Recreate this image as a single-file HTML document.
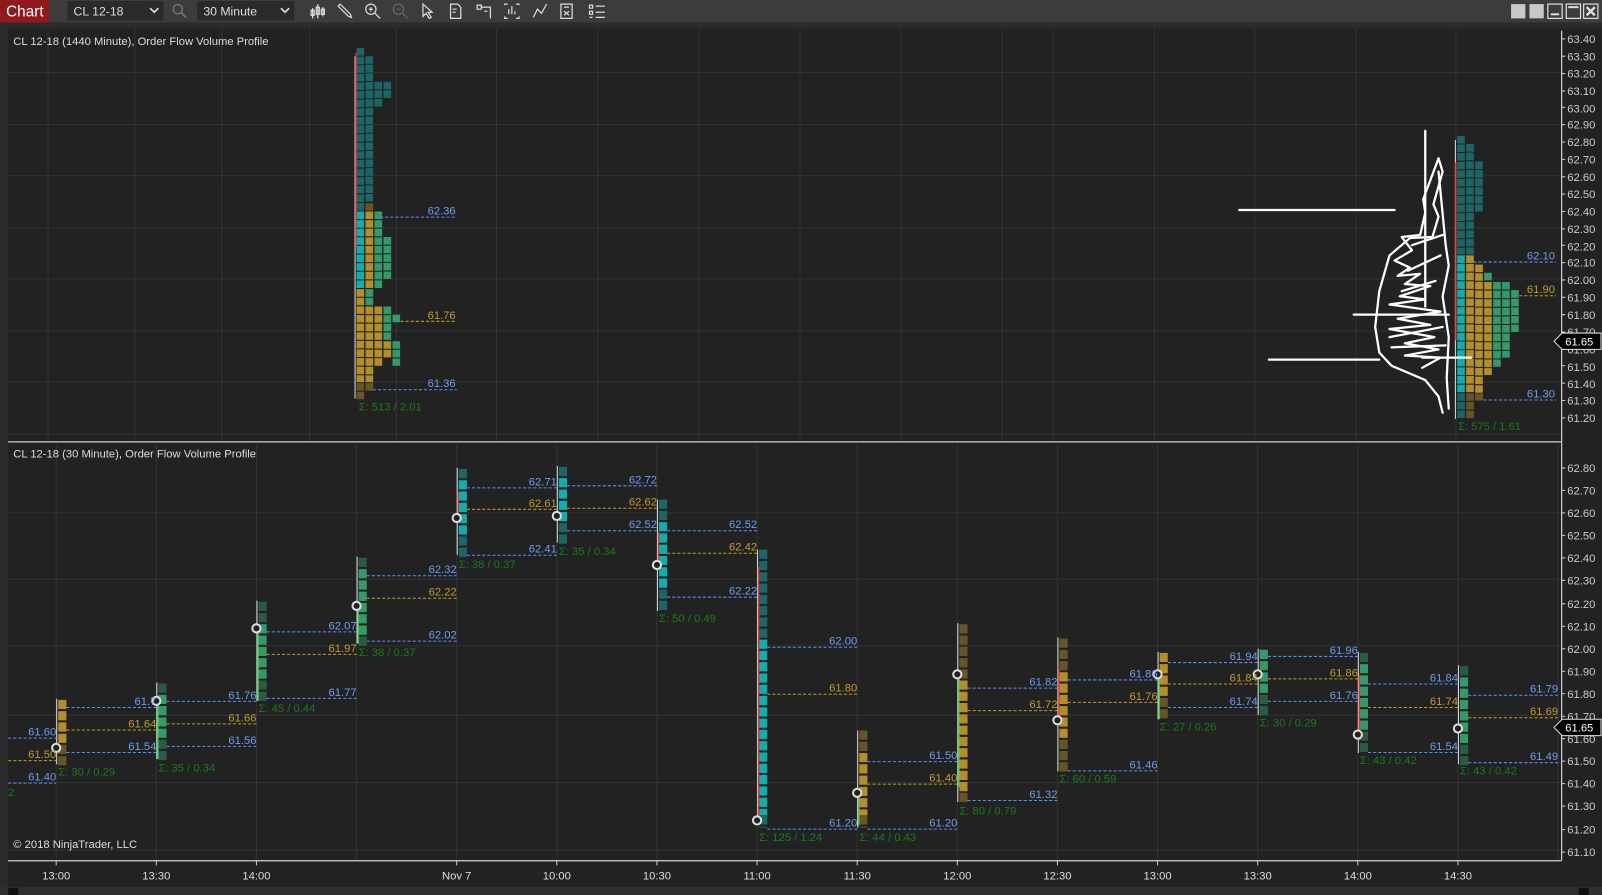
<!DOCTYPE html>
<html><head><meta charset="utf-8"><style>
html,body{margin:0;padding:0;background:#2b2b2b;overflow:hidden}
svg{display:block}
text{font-family:"Liberation Sans",sans-serif}
</style></head><body>
<svg width="1602" height="895" viewBox="0 0 1568 876" xmlns="http://www.w3.org/2000/svg">
<rect width="1568" height="876" fill="#2b2b2b"/>
<!-- toolbar -->
<rect x="0" y="0" width="1568" height="22" fill="#3c3c3c"/>
<rect x="0" y="0" width="48" height="22" fill="#8e1a1c"/>
<text x="6" y="16" font-size="15" fill="#fff">Chart</text>
<rect x="66" y="1" width="94" height="19" fill="#2a2a2a"/>
<text x="72" y="15" font-size="12" fill="#ddd">CL 12-18</text>
<path d="M147 8 l4 4 l4 -4" stroke="#ddd" stroke-width="1.6" fill="none"/>
<circle cx="174" cy="9" r="4.5" stroke="#777" stroke-width="1.3" fill="none"/><path d="M177 12 l5 5" stroke="#777" stroke-width="1.6"/>
<rect x="193" y="1" width="95" height="19" fill="#2a2a2a"/>
<text x="199" y="15" font-size="12" fill="#ddd">30 Minute</text>
<path d="M275 8 l4 4 l4 -4" stroke="#ddd" stroke-width="1.6" fill="none"/>
<g stroke="#ddd" stroke-width="1.2" fill="none">
<path d="M306 8v10M311 4v14M316 7v9"/><rect x="304.5" y="10" width="3" height="5"/><rect x="309.5" y="7" width="3" height="7"/><rect x="314.5" y="9" width="3" height="5"/>
<path d="M331 6 l10 10 l3 1 l-1 -3 l-10 -10z"/>
<circle cx="363" cy="9" r="5"/><path d="M367 13l5 5M361 9h4M363 7v4"/>
<g stroke="#666"><circle cx="390" cy="9" r="5"/><path d="M394 13l5 5M388 9h4"/></g>
<path d="M414 4v12l3-3 3 5 2-1-3-5h4z"/>
<path d="M441 4h7l3 3v11h-10z M443 9h4M443 12h3"/>
<path d="M467 5h4v4h-4zM471 7h9v11M474 11h3"/>
<path d="M494 5v-1h3M494 16v2h3M505 4h3v1M505 18h3v-2M498 14v-5M501 14v-8M504 14v-3"/>
<path d="M522 17l4-8 4 4 5-9"/>
<path d="M549 4h11v14h-11zM552 7h5M552 11l5 4M557 11l-5 4"/>
<path d="M577 5h3v3h-3zM577 11h3v3h-3zM577 17h3v0M583 6h9M583 12h9M583 17h9"/>
</g>
<g fill="#c8c8c8"><rect x="1479" y="4" width="14" height="14"/><rect x="1497" y="4" width="14" height="14"/></g>
<g stroke="#ddd" stroke-width="1.2" fill="none"><rect x="1515" y="4" width="14" height="14"/><path d="M1518 14h8" stroke-width="2"/><rect x="1533" y="4" width="14" height="14"/><path d="M1535 7h10" stroke-width="2"/><rect x="1550" y="4" width="14" height="14"/><path d="M1553 7l8 8M1561 7l-8 8" stroke-width="2.4"/></g>
<!-- chart area -->
<rect x="8" y="28" width="1560" height="840" fill="#222"/>
<rect x="0" y="22" width="8" height="854" fill="#2b2b2b"/>
<rect x="0" y="868" width="1568" height="8" fill="#303030"/>
<!-- top grid -->
<g stroke="#333" stroke-width="1">
<path d="M47 28v403M132 28v403M217 28v403M303 28v403M388 28v403M486 28v403M585 28v403M684 28v403M783 28v403M882 28v403M981 28v403M1031 28v403M1130 28v403M1228 28v403M1327 28v403M1425 28v403"/>
<path d="M8 71H1528M8 122H1528M8 172H1528M8 223H1528M8 273H1528M8 324H1528M8 374H1528M8 425H1528"/>
<path d="M55 435v407M153 435v407M251 435v407M349 435v407M447 435v407M545 435v407M643 435v407M741 435v407M839 435v407M937 435v407M1035 435v407M1133 435v407M1231 435v407M1329 435v407M1427 435v407M1525 435v407"/>
<path d="M8 502H1528M8 567H1528M8 632H1528M8 700H1528M8 766H1528M8 832H1528"/>
</g>
<path d="M8 432.5H1528" stroke="#cfcfcf" stroke-width="1.2"/>
<path d="M1528.5 30V842M8 842.5H1528.5" stroke="#d0d0d0" stroke-width="1.2"/>
<text x="13" y="44" font-size="11" fill="#ddd">CL 12-18 (1440 Minute), Order Flow Volume Profile</text>
<text x="13" y="448" font-size="11" fill="#ddd">CL 12-18 (30 Minute), Order Flow Volume Profile</text>
<text x="13" y="830" font-size="11" fill="#ddd">© 2018 NinjaTrader, LLC</text>
<!-- price axis top -->
<g font-size="11" fill="#ccc">
<text x="1534" y="42">63.40</text><text x="1534" y="59">63.30</text><text x="1534" y="76">63.20</text><text x="1534" y="93">63.10</text><text x="1534" y="110">63.00</text><text x="1534" y="126">62.90</text><text x="1534" y="143">62.80</text><text x="1534" y="160">62.70</text><text x="1534" y="177">62.60</text><text x="1534" y="194">62.50</text><text x="1534" y="211">62.40</text><text x="1534" y="228">62.30</text><text x="1534" y="245">62.20</text><text x="1534" y="261">62.10</text><text x="1534" y="278">62.00</text><text x="1534" y="295">61.90</text><text x="1534" y="312">61.80</text><text x="1534" y="329">61.70</text><text x="1534" y="346">61.60</text><text x="1534" y="363">61.50</text><text x="1534" y="380">61.40</text><text x="1534" y="396">61.30</text><text x="1534" y="413">61.20</text>
<text x="1534" y="462">62.80</text><text x="1534" y="484">62.70</text><text x="1534" y="506">62.60</text><text x="1534" y="528">62.50</text><text x="1534" y="550">62.40</text><text x="1534" y="572">62.30</text><text x="1534" y="595">62.20</text><text x="1534" y="617">62.10</text><text x="1534" y="639">62.00</text><text x="1534" y="661">61.90</text><text x="1534" y="683">61.80</text><text x="1534" y="705">61.70</text><text x="1534" y="727">61.60</text><text x="1534" y="749">61.50</text><text x="1534" y="771">61.40</text><text x="1534" y="793">61.30</text><text x="1534" y="816">61.20</text><text x="1534" y="838">61.10</text>
</g>
<g stroke="#ccc"><path d="M1528 38h4M1528 55h4M1528 72h4M1528 89h4M1528 105h4M1528 122h4M1528 139h4M1528 156h4M1528 173h4M1528 190h4M1528 207h4M1528 224h4M1528 240h4M1528 257h4M1528 274h4M1528 291h4M1528 308h4M1528 325h4M1528 342h4M1528 358h4M1528 375h4M1528 392h4M1528 409h4"/>
<path d="M1528 458h4M1528 480h4M1528 502h4M1528 524h4M1528 546h4M1528 568h4M1528 591h4M1528 613h4M1528 635h4M1528 657h4M1528 679h4M1528 701h4M1528 723h4M1528 745h4M1528 767h4M1528 789h4M1528 812h4M1528 834h4"/></g>
<!-- price markers -->
<path d="M1521 334 l8 -8 h38 v16 h-38z" fill="#000" stroke="#ddd"/><text x="1532" y="338" font-size="11" fill="#fff">61.65</text>
<path d="M1521 712 l8 -8 h38 v16 h-38z" fill="#000" stroke="#ddd"/><text x="1532" y="716" font-size="11" fill="#fff">61.65</text>
<!-- time axis -->
<g stroke="#ccc"><path d="M55 842v5M153 842v5M251 842v5M447 842v5M545 842v5M643 842v5M741 842v5M839 842v5M937 842v5M1035 842v5M1133 842v5M1231 842v5M1329 842v5M1427 842v5"/></g>
<g font-size="11" fill="#ddd" text-anchor="middle">
<text x="55" y="861">13:00</text><text x="153" y="861">13:30</text><text x="251" y="861">14:00</text><text x="447" y="861">Nov 7</text><text x="545" y="861">10:00</text><text x="643" y="861">10:30</text><text x="741" y="861">11:00</text><text x="839" y="861">11:30</text><text x="937" y="861">12:00</text><text x="1035" y="861">12:30</text><text x="1133" y="861">13:00</text><text x="1231" y="861">13:30</text><text x="1329" y="861">14:00</text><text x="1427" y="861">14:30</text>
</g>

<!-- TOP LEFT PROFILE -->
<g stroke-width="7.5" stroke-dasharray="7.4 1.03">
<line x1="352.7" x2="352.7" y1="47" y2="206" stroke="#1e6565"/>
<line x1="352.7" x2="352.7" y1="207" y2="282" stroke="#13adad"/>
<line x1="352.7" x2="352.7" y1="283" y2="374" stroke="#b48e28"/>
<line x1="352.7" x2="352.7" y1="375" y2="392" stroke="#675528"/>
<line x1="361.5" x2="361.5" y1="55" y2="198" stroke="#1e6565"/>
<line x1="361.5" x2="361.5" y1="199" y2="206" stroke="#675528"/>
<line x1="361.5" x2="361.5" y1="207" y2="282" stroke="#b48e28"/>
<line x1="361.5" x2="361.5" y1="283" y2="299" stroke="#35996a"/>
<line x1="361.5" x2="361.5" y1="300" y2="374" stroke="#b48e28"/>
<line x1="361.5" x2="361.5" y1="375" y2="383" stroke="#675528"/>
<line x1="370.3" x2="370.3" y1="80" y2="105" stroke="#1e6565"/>
<line x1="370.3" x2="370.3" y1="207" y2="282" stroke="#35996a"/>
<line x1="370.3" x2="370.3" y1="300" y2="358" stroke="#b48e28"/>
<line x1="379.1" x2="379.1" y1="80" y2="96" stroke="#1e6565"/>
<line x1="379.1" x2="379.1" y1="232" y2="273" stroke="#35996a"/>
<line x1="379.1" x2="379.1" y1="300" y2="333" stroke="#35996a"/>
<line x1="379.1" x2="379.1" y1="334" y2="350" stroke="#b48e28"/>
<line x1="387.9" x2="387.9" y1="308" y2="316" stroke="#35996a"/>
<line x1="387.9" x2="387.9" y1="334" y2="358" stroke="#35996a"/>
</g>
<path d="M347.5 55V390" stroke="#ddd" stroke-width="1"/>
<path d="M348.5 52V242" stroke="#e03030" stroke-width="1.5"/>
<g font-size="11">
<path d="M372 212.5H447" stroke="#5b8ff5" stroke-dasharray="3 2"/><text x="446" y="210" text-anchor="end" fill="#6f9cf0">62.36</text>
<path d="M392 314.5H447" stroke="#c39a2c" stroke-dasharray="3 2"/><text x="446" y="312" text-anchor="end" fill="#c39a2c">61.76</text>
<path d="M365 381.5H447" stroke="#5b8ff5" stroke-dasharray="3 2"/><text x="446" y="379" text-anchor="end" fill="#6f9cf0">61.36</text>
<text x="351" y="402" fill="#1b7a1b">Σ: 513 / 2.01</text>
</g>

<!-- TOP RIGHT PROFILE -->
<g stroke-width="7.5" stroke-dasharray="7.4 1.03">
<line x1="1430" x2="1430" y1="133" y2="249" stroke="#1e6565"/>
<line x1="1430" x2="1430" y1="250" y2="384" stroke="#13adad"/>
<line x1="1430" x2="1430" y1="385" y2="410" stroke="#1e6565"/>
<line x1="1438.8" x2="1438.8" y1="141" y2="249" stroke="#1e6565"/>
<line x1="1438.8" x2="1438.8" y1="250" y2="384" stroke="#b48e28"/>
<line x1="1438.8" x2="1438.8" y1="385" y2="410" stroke="#675528"/>
<line x1="1447.6" x2="1447.6" y1="158" y2="207" stroke="#1e6565"/>
<line x1="1447.6" x2="1447.6" y1="259" y2="392" stroke="#b48e28"/>
<line x1="1447.6" x2="1447.6" y1="385" y2="392" stroke="#675528"/>
<line x1="1456.4" x2="1456.4" y1="267" y2="275" stroke="#35996a"/>
<line x1="1456.4" x2="1456.4" y1="276" y2="367" stroke="#b48e28"/>
<line x1="1465.2" x2="1465.2" y1="276" y2="359" stroke="#35996a"/>
<line x1="1474" x2="1474" y1="276" y2="350" stroke="#35996a"/>
<line x1="1482.8" x2="1482.8" y1="284" y2="325" stroke="#35996a"/>
</g>
<path d="M1424.5 137V410" stroke="#ddd" stroke-width="1"/>
<path d="M1425 159V333" stroke="#e03030" stroke-width="1.5"/>
<g font-size="11">
<path d="M1442 256.5H1523" stroke="#5b8ff5" stroke-dasharray="3 2"/><text x="1522" y="254" text-anchor="end" fill="#6f9cf0">62.10</text>
<path d="M1487 289.5H1523" stroke="#c39a2c" stroke-dasharray="3 2"/><text x="1522" y="287" text-anchor="end" fill="#c39a2c">61.90</text>
<path d="M1452 391.5H1523" stroke="#5b8ff5" stroke-dasharray="3 2"/><text x="1522" y="389" text-anchor="end" fill="#6f9cf0">61.30</text>
<text x="1427" y="421" fill="#1b7a1b">Σ: 575 / 1.61</text>
</g>
<!-- scribble -->
<g stroke="#fff" stroke-width="2.2" fill="none" stroke-linecap="round" stroke-linejoin="round">
<path d="M1213 205.5H1365"/><path d="M1242 352H1350"/>
<path d="M1395 128V300"/>
<path d="M1408 155 L1412 168 L1403 200 L1408 212 L1402 232 L1380 233 L1360 250 L1350 285 L1346 320 L1350 345 L1362 358 L1395 372 L1408 388 L1412 404"/>
<path d="M1408 155 L1393 195 L1395 208 L1390 230 L1372 232 L1382 245 L1365 255 L1380 262 L1368 270 L1390 268 L1375 278 L1400 280 L1370 290 L1395 293 L1360 298 L1410 305 L1368 312 L1400 318 L1360 322 L1404 330 L1375 336 L1408 342 L1375 348 L1410 350 L1392 360"/>
<path d="M1325 308 H1418"/><path d="M1392 350 H1440"/>
<path d="M1408 168 L1415 240 L1418 260 L1412 290 L1418 330 L1416 370 L1418 400"/>
<path d="M1382 240 L1412 230 M1378 265 L1410 250 M1372 285 L1405 275 M1360 330 L1412 320 M1362 340 L1415 338"/>
</g>

<!-- BOTTOM BARS -->
<g stroke-width="8" stroke-dasharray="9 2.05">
<!-- 13:00 -->
<line x1="61" x2="61" y1="685" y2="728" stroke="#b48e28"/><line x1="61" x2="61" y1="729" y2="750" stroke="#675528"/>
<!-- 13:30 -->
<line x1="159" x2="159" y1="669" y2="680" stroke="#2d5a45"/><line x1="159" x2="159" y1="680" y2="724" stroke="#35996a"/><line x1="159" x2="159" y1="724" y2="746" stroke="#2d5a45"/>
<!-- 14:00 -->
<line x1="257" x2="257" y1="589" y2="611" stroke="#2d5a45"/><line x1="257" x2="257" y1="611" y2="666" stroke="#35996a"/><line x1="257" x2="257" y1="666" y2="688" stroke="#2d5a45"/>
<!-- 14:30 -->
<line x1="355" x2="355" y1="546" y2="557" stroke="#2d5a45"/><line x1="355" x2="355" y1="557" y2="623" stroke="#35996a"/><line x1="355" x2="355" y1="623" y2="634" stroke="#2d5a45"/>
<!-- Nov7 -->
<line x1="453" x2="453" y1="459" y2="470" stroke="#1e6565"/><line x1="453" x2="453" y1="470" y2="525" stroke="#13adad"/><line x1="453" x2="453" y1="525" y2="547" stroke="#1e6565"/>
<!-- 10:00 -->
<line x1="551" x2="551" y1="457" y2="468" stroke="#1e6565"/><line x1="551" x2="551" y1="468" y2="512" stroke="#13adad"/><line x1="551" x2="551" y1="512" y2="534" stroke="#1e6565"/>
<!-- 10:30 -->
<line x1="649" x2="649" y1="489" y2="511" stroke="#1e6565"/><line x1="649" x2="649" y1="511" y2="577" stroke="#13adad"/><line x1="649" x2="649" y1="577" y2="599" stroke="#1e6565"/>
<!-- 11:00 -->
<line x1="747" x2="747" y1="538" y2="626" stroke="#1e6565"/><line x1="747" x2="747" y1="626" y2="798" stroke="#13adad"/><line x1="747" x2="747" y1="798" y2="810" stroke="#1e6565"/>
<!-- 11:30 -->
<line x1="845" x2="845" y1="715" y2="737" stroke="#675528"/><line x1="845" x2="845" y1="737" y2="798" stroke="#b48e28"/><line x1="845" x2="845" y1="798" y2="810" stroke="#675528"/>
<!-- 12:00 -->
<line x1="943" x2="943" y1="611" y2="666" stroke="#675528"/><line x1="943" x2="943" y1="666" y2="776" stroke="#b48e28"/><line x1="943" x2="943" y1="776" y2="787" stroke="#675528"/>
<!-- 12:30 -->
<line x1="1041" x2="1041" y1="625" y2="658" stroke="#675528"/><line x1="1041" x2="1041" y1="658" y2="724" stroke="#b48e28"/><line x1="1041" x2="1041" y1="724" y2="757" stroke="#675528"/>
<!-- 13:00 -->
<line x1="1139" x2="1139" y1="639" y2="683" stroke="#b48e28"/><line x1="1139" x2="1139" y1="683" y2="705" stroke="#675528"/>
<!-- 13:30 -->
<line x1="1237" x2="1237" y1="636" y2="680" stroke="#35996a"/><line x1="1237" x2="1237" y1="680" y2="702" stroke="#2d5a45"/>
<!-- 14:00 -->
<line x1="1335" x2="1335" y1="639" y2="650" stroke="#2d5a45"/><line x1="1335" x2="1335" y1="650" y2="716" stroke="#35996a"/><line x1="1335" x2="1335" y1="716" y2="738" stroke="#2d5a45"/>
<!-- 14:30 -->
<line x1="1433" x2="1433" y1="652" y2="663" stroke="#2d5a45"/><line x1="1433" x2="1433" y1="663" y2="729" stroke="#35996a"/><line x1="1433" x2="1433" y1="729" y2="751" stroke="#2d5a45"/>
</g>
<!-- wicks -->
<g stroke="#ddd" stroke-width="1">
<path d="M55.5 684V748M153.5 668V743M251.5 588V686M349.5 545V630M447.5 458V543M545.5 456V531M643.5 489V598M741.5 538V808M839.5 715V810M937.5 610V785M1035.5 624V755M1133.5 638V704M1231.5 635V700M1329.5 638V737M1427.5 651V748"/>
</g>
<g stroke-width="1.4">
<path d="M154.5 686V743M252.5 615V686M350.5 593V630M938.5 660V770M840.5 776V808M1134.5 660V704" stroke="#4fd060"/>
<path d="M448.5 482V507M742.5 555V803M1036.5 655V705M644.5 520V553M1330.5 660V719" stroke="#e03030"/>
</g>
<g fill="#222" stroke="#ddd" stroke-width="2">
<circle cx="55" cy="732" r="4"/><circle cx="153" cy="686" r="4"/><circle cx="251" cy="615" r="4"/><circle cx="349" cy="593" r="4"/><circle cx="447" cy="507" r="4"/><circle cx="545" cy="505" r="4"/><circle cx="643" cy="553" r="4"/><circle cx="741" cy="803" r="4"/><circle cx="839" cy="776" r="4"/><circle cx="937" cy="660" r="4"/><circle cx="1035" cy="705" r="4"/><circle cx="1133" cy="660" r="4"/><circle cx="1231" cy="660" r="4"/><circle cx="1329" cy="719" r="4"/><circle cx="1427" cy="713" r="4"/>
</g>
<!-- bottom levels -->
<g stroke-dasharray="3 2" stroke-width="1">
<g stroke="#5b8ff5"><path d="M8 722.5H55M8 766.5H55M65 692.5H153M65 736.5H153M163 686.5H251M163 730.5H251M261 618.5H349M261 683.5H349M359 563.5H447M359 627.5H447M457 477.5H545M457 543.5H545M555 475.5H643M555 519.5H643M653 519.5H741M653 584.5H741M751 633.5H839M751 811.5H839M849 745.5H937M849 811.5H937M947 673.5H1035M947 783.5H1035M1045 754.5H1133M1045 665.5H1133M1143 648.5H1231M1143 692.5H1231M1241 642.5H1329M1241 686.5H1329M1339 669.5H1427M1339 736.5H1427M1437 680.5H1525M1437 746.5H1525"/></g>
<g stroke="#c39a2c"><path d="M8 744.5H55M65 714.5H153M163 708.5H251M261 640.5H349M359 585.5H447M457 498.5H545M555 497.5H643M653 541.5H741M751 679.5H839M849 767.5H937M947 695.5H1035M1045 687.5H1133M1143 669.5H1231M1241 664.5H1329M1339 692.5H1427M1437 702.5H1525"/></g>
</g>
<g font-size="11" text-anchor="end">
<g fill="#6f9cf0">
<text x="55" y="720">61.60</text><text x="55" y="764">61.40</text>
<text x="153" y="690">61.7</text><text x="153" y="734">61.54</text>
<text x="251" y="684">61.76</text><text x="251" y="728">61.56</text>
<text x="349" y="616">62.07</text><text x="349" y="681">61.77</text>
<text x="447" y="561">62.32</text><text x="447" y="625">62.02</text>
<text x="545" y="475">62.71</text><text x="545" y="541">62.41</text>
<text x="643" y="473">62.72</text><text x="643" y="517">62.52</text>
<text x="741" y="517">62.52</text><text x="741" y="582">62.22</text>
<text x="839" y="631">62.00</text><text x="839" y="809">61.20</text>
<text x="937" y="743">61.50</text><text x="937" y="809">61.20</text>
<text x="1035" y="671">61.82</text><text x="1035" y="781">61.32</text>
<text x="1133" y="752">61.46</text><text x="1133" y="663">61.86</text>
<text x="1231" y="646">61.94</text><text x="1231" y="690">61.74</text>
<text x="1329" y="640">61.96</text><text x="1329" y="684">61.76</text>
<text x="1427" y="667">61.84</text><text x="1427" y="734">61.54</text>
<text x="1525" y="678">61.79</text><text x="1525" y="744">61.49</text>
</g>
<g fill="#c39a2c">
<text x="55" y="742">61.50</text><text x="153" y="712">61.64</text><text x="251" y="706">61.66</text><text x="349" y="638">61.97</text><text x="447" y="583">62.22</text><text x="545" y="496">62.61</text><text x="643" y="495">62.62</text><text x="741" y="539">62.42</text><text x="839" y="677">61.80</text><text x="937" y="765">61.40</text><text x="1035" y="693">61.72</text><text x="1133" y="685">61.76</text><text x="1231" y="667">61.84</text><text x="1329" y="662">61.86</text><text x="1427" y="690">61.74</text><text x="1525" y="700">61.69</text>
</g>
</g>
<g font-size="11" fill="#1b7a1b">
<text x="57" y="759">Σ: 30 / 0.29</text><text x="155" y="755">Σ: 35 / 0.34</text><text x="253" y="697">Σ: 45 / 0.44</text><text x="351" y="642">Σ: 38 / 0.37</text><text x="449" y="556">Σ: 38 / 0.37</text><text x="547" y="543">Σ: 35 / 0.34</text><text x="645" y="609">Σ: 50 / 0.49</text><text x="743" y="823">Σ: 125 / 1.24</text><text x="841" y="823">Σ: 44 / 0.43</text><text x="939" y="797">Σ: 80 / 0.79</text><text x="1037" y="766">Σ: 60 / 0.59</text><text x="1135" y="715">Σ: 27 / 0.26</text><text x="1233" y="711">Σ: 30 / 0.29</text><text x="1331" y="748">Σ: 43 / 0.42</text><text x="1429" y="758">Σ: 43 / 0.42</text>
<text x="8" y="779">2</text>
</g>
<rect x="8" y="869" width="10" height="7" fill="#111"/><rect x="1545" y="869" width="10" height="7" fill="#111"/>
</svg>
</body></html>
